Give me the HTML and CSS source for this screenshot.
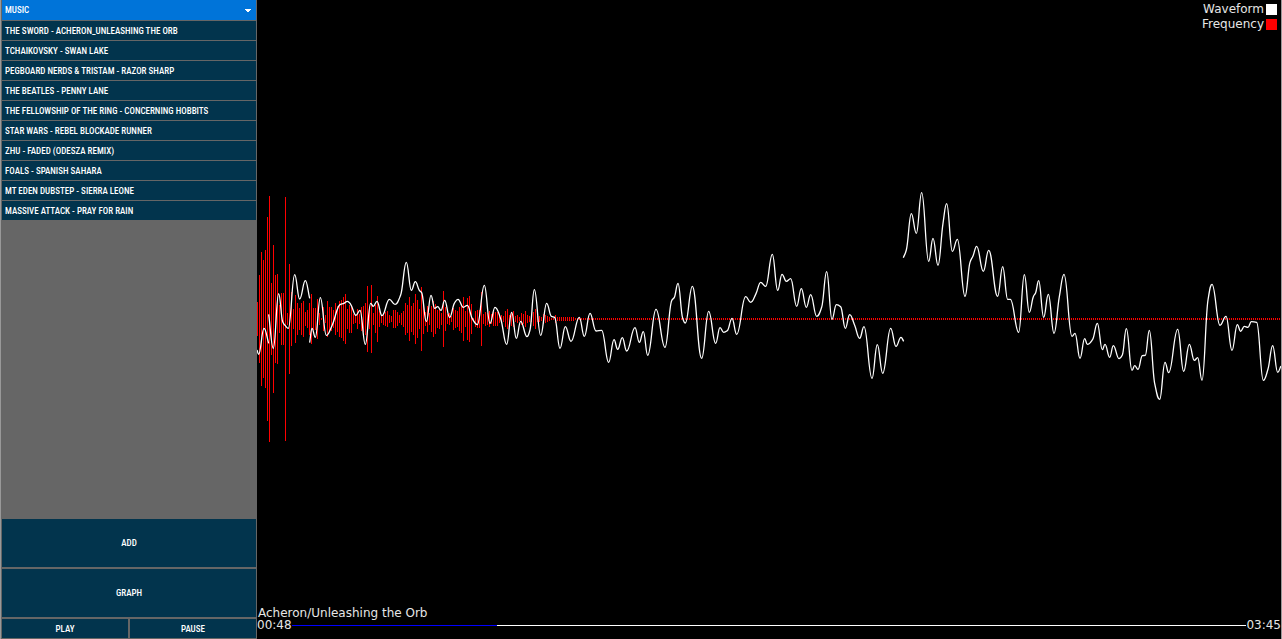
FILE: index.html
```html
<!DOCTYPE html>
<html lang="en">
<head>
<meta charset="utf-8">
<title>Music Visualizer</title>
<link rel="stylesheet" href="styles.css">
</head>
<body>
<div class="app">
  <aside class="sidebar">
    <button class="dropdown" type="button" aria-expanded="true" aria-controls="songs">MUSIC
      <svg class="caret" viewBox="0 0 6 3" width="6" height="3" aria-hidden="true"><path d="M0 0H6V1H5V2H4V3H2V2H1V1H0Z" fill="#fff"/></svg>
    </button>
    <ul class="songs" id="songs">
      <li><button class="song" type="button">THE SWORD - ACHERON_UNLEASHING THE ORB</button></li>
      <li><button class="song" type="button">TCHAIKOVSKY - SWAN LAKE</button></li>
      <li><button class="song" type="button">PEGBOARD NERDS &amp; TRISTAM - RAZOR SHARP</button></li>
      <li><button class="song" type="button">THE BEATLES - PENNY LANE</button></li>
      <li><button class="song" type="button">THE FELLOWSHIP OF THE RING - CONCERNING HOBBITS</button></li>
      <li><button class="song" type="button">STAR WARS - REBEL BLOCKADE RUNNER</button></li>
      <li><button class="song" type="button">ZHU - FADED (ODESZA REMIX)</button></li>
      <li><button class="song" type="button">FOALS - SPANISH SAHARA</button></li>
      <li><button class="song" type="button">MT EDEN DUBSTEP - SIERRA LEONE</button></li>
      <li><button class="song" type="button">MASSIVE ATTACK - PRAY FOR RAIN</button></li>
    </ul>
    <div class="actions">
      <button class="action large" type="button">ADD</button>
      <button class="action large" type="button">GRAPH</button>
      <button class="action" type="button">PLAY</button>
      <button class="action" type="button">PAUSE</button>
    </div>
  </aside>
  <main class="stage">
    <svg class="plot" viewBox="257 0 1024 639" preserveAspectRatio="none" role="img" aria-label="Waveform and frequency plot">
      <path id="bars" class="bars"/>
      <path id="wave" class="wave"/>
    </svg>
    <div class="overlay">
      <ul class="legend">
        <li>Waveform<span class="swatch white"></span></li>
        <li>Frequency<span class="swatch red"></span></li>
      </ul>
      <footer class="player">
        <label class="title" for="seek">Acheron/Unleashing the Orb</label>
        <div class="timeline">
          <span>00:48</span>
          <input class="seek" id="seek" type="range" min="0" max="225" value="48">
          <span>03:45</span>
        </div>
      </footer>
    </div>
  </main>
</div>
<script src="plot.js"></script>
</body>
</html>
```
FILE: styles.css
```css
* { box-sizing: border-box; }
body { margin: 0; background: #000; }
ul { margin: 0; padding: 0; list-style: none; }
button { border: 0; border-radius: 0; padding: 0; color: #fff; font: inherit; cursor: pointer; }

.app {
  display: flex;
  min-height: 100vh;
  border-right: 1px solid #999;
  border-left: 1px solid #999;
}

.sidebar {
  display: flex;
  flex-direction: column;
  flex: none;
  width: 256px;
  padding: 0 1px 1px;
  background: #666;
  font: 500 9px/12px "Roboto Condensed", Roboto, sans-serif;
}
.dropdown {
  display: flex;
  align-items: center;
  justify-content: space-between;
  height: 20px;
  padding: 0 5px 0 3px;
  background: #0074d9;
}
.songs { display: grid; grid-template-columns: minmax(0, 1fr); gap: 1px; padding-top: 1px; }
.song {
  display: block;
  width: 100%;
  height: 19px;
  padding: 1px 3px 0;
  overflow: hidden;
  background: #02344d;
  text-align: left;
  white-space: nowrap;
}
.actions {
  display: grid;
  grid-template-columns: 1fr 1fr;
  gap: 2px;
  margin-top: auto;
}
.action { height: 19px; background: #02344d; }
.large { grid-column: 1 / -1; height: 48px; }

.stage {
  display: grid;
  flex: 1;
  min-width: 0;
  color: #e6e6e6;
  font: 12px/15px "DejaVu Sans", sans-serif;
}
.plot, .overlay { grid-area: 1 / 1; }
.plot { width: 100%; height: 100%; min-height: 0; }
.bars { fill: #f00; shape-rendering: crispEdges; }
.wave { fill: none; stroke: #fff; stroke-width: 1.3; }
.overlay { display: flex; flex-direction: column; justify-content: space-between; z-index: 1; }

.legend { padding: 2px 4px 0 0; }
.legend li { display: flex; align-items: center; justify-content: flex-end; gap: 2px; }
.swatch { width: 11px; height: 11px; }
.white { background: #fff; }
.red { background: #f00; }

.player { line-height: 12px; padding-bottom: 8px; }
.title { display: block; padding-left: 1px; }
.timeline { display: flex; align-items: center; }
.seek {
  flex: 1;
  min-width: 0;
  height: 1px;
  margin: 0;
  appearance: none;
  background: linear-gradient(to right, #00f 21.5%, #fff 21.5%);
}
.seek::-webkit-slider-thumb { appearance: none; width: 1px; height: 1px; }
```
FILE: plot.js
```js
// Bar half-heights, one bar every two units from the left edge.
const bars = [
  17, 44, 67, 59, 69, 102, 123, 36, 74, 44, 45, 14, 26, 26, 122, 6, 55, 27, 10, 24,
  16, 11, 16, 18, 7, 9, 16, 25, 11, 11, 20, 6, 1, 12, 4, 18, 12, 12, 9, 16,
  13, 18, 19, 22, 25, 10, 14, 14, 5, 4, 10, 5, 12, 13, 16, 33, 10, 34, 6, 14,
  23, 8, 4, 6, 7, 8, 4, 3, 9, 9, 7, 4, 6, 8, 16, 14, 22, 13, 16, 25,
  19, 10, 32, 15, 7, 13, 6, 13, 18, 15, 9, 10, 6, 28, 12, 5, 6, 3, 11, 9,
  8, 12, 14, 22, 8, 21, 23, 15, 1, 8, 9, 9, 27, 5, 7, 6, 8, 5, 7, 7,
  7, 4, 4, 3, 8, 10, 4, 7, 8, 3, 4, 2, 6, 5, 8, 4, 3, 3, 7, 10,
  3, 3, 2, 5, 4, 3, 2, 1, 1, 4, 2, 2, 2, 2, 2, 2, 2, 2, 2
];

// Continuous runs of the signal. Each chunk is an origin and samples in thirds of a unit.
const runs = [
  [[250, 180, [21,510, 26,523, 42,445, 56,490]]],
  [[250, 180, [56,403, 70,505, 86,341, 98,425, 106,437, 115,445, 134,284, 149,357, 166,302, 179,355]]],
  [
    [250, 180, [179,488, 186,445, 196,472, 211,353, 229,466, 246,437, 270,374, 282,370, 292,364, 302,373,
      318,406, 330,391, 346,493, 362,370, 370,379, 381,364, 396,407, 418,358, 435,373, 452,345, 469,247]],
    [400, 240, [34,151, 46,125, 58,151, 65,158, 79,245, 93,166, 104,205, 113,200, 123,211, 134,181,
      149,232, 163,190, 174,178, 190,202, 202,196, 217,236, 232,254, 253,136, 270,250, 285,202, 302,236,
      320,313, 335,217, 349,295, 362,244, 381,290, 390,270, 403,149, 422,286, 440,190, 454,229, 464,232]],
    [560, 240, [0,325, 16,260, 33,304, 58,232, 73,289, 90,220, 108,273, 125,271, 146,367, 162,299,
      173,328, 187,293, 200,333, 225,263, 238,307, 250,275, 263,346, 288,208, 315,322, 335,182, 343,172,
      354,130, 368,235, 376,249, 397,139, 425,355, 446,214, 467,310, 480,263, 491,277, 502,272]],
    [730, 240, [6,235, 20,283, 47,170, 62,187, 78,161, 92,127, 107,139, 127,43, 143,151, 156,103,
      169,124, 182,116, 200,199, 214,146, 229,202, 242,164, 260,229, 275,202, 290,95, 306,238, 319,194,
      332,200, 346,265, 359,224, 374,256, 389,295, 402,260, 426,415, 442,314, 458,400, 482,265, 498,319,
      513,292, 521,304]]
  ],
  [
    [890, 180, [40,233, 49,210, 64,101, 79,160, 95,38, 116,244, 129,175, 144,256, 159,130, 170,71,
      187,214, 202,178, 225,349, 240,247, 249,228, 260,199, 280,274, 296,211, 323,349, 338,260, 353,358,
      361,358, 386,457, 403,284, 418,397, 430,350, 437,338, 446,302, 461,412, 475,343, 492,460, 508,350,
      522,283]],
    [1050, 260, [66,229, 75,220, 90,295, 104,236, 112,253, 128,238, 142,190, 157,269, 165,253, 179,292,
      190,257, 207,296, 217,285, 229,206, 246,331, 254,317, 264,328, 277,287, 286,286, 298,211, 314,370,
      329,418, 345,307, 356,338]],
    [1160, 270, [53,178, 71,304, 88,223, 103,271, 113,263, 126,331, 144,90, 156,43, 180,166, 198,139,
      216,241, 232,164, 242,184, 253,169, 264,172, 274,155, 290,157, 310,331, 324,297, 338,227, 353,307,
      363,288]]
  ]
];

function toPoints(chunks) {
  const points = [];
  for (const [ox, oy, v] of chunks) {
    for (let i = 0; i < v.length; i += 2) points.push([ox + v[i] / 3, oy + v[i + 1] / 3]);
  }
  return points;
}

// Monotone curve: flat at every peak and trough, no overshoot between samples.
function curve(p) {
  const slope = i => (p[i + 1][1] - p[i][1]) / (p[i + 1][0] - p[i][0]);
  const tangent = i => {
    if (i === 0) return slope(0);
    if (i === p.length - 1) return slope(i - 1);
    const a = slope(i - 1), b = slope(i);
    return a * b <= 0 ? 0 : 2 * a * b / (a + b);
  };
  let d = `M${p[0][0]} ${p[0][1]}`;
  for (let i = 0; i < p.length - 1; i++) {
    const [x0, y0] = p[i], [x1, y1] = p[i + 1], h = (x1 - x0) * 0.43;
    d += `C${x0 + h} ${y0 + h * tangent(i)} ${x1 - h} ${y1 - h * tangent(i + 1)} ${x1} ${y1}`;
  }
  return d;
}

let barPath = "";
for (let i = 0; i < 512; i++) {
  const h = bars[i] || 1;
  barPath += `M${257 + 2 * i} ${319 - h}h1v${2 * h}h-1z`;
}
document.getElementById("bars").setAttribute("d", barPath);
document.getElementById("wave").setAttribute("d", runs.map(r => curve(toPoints(r))).join(""));
```
